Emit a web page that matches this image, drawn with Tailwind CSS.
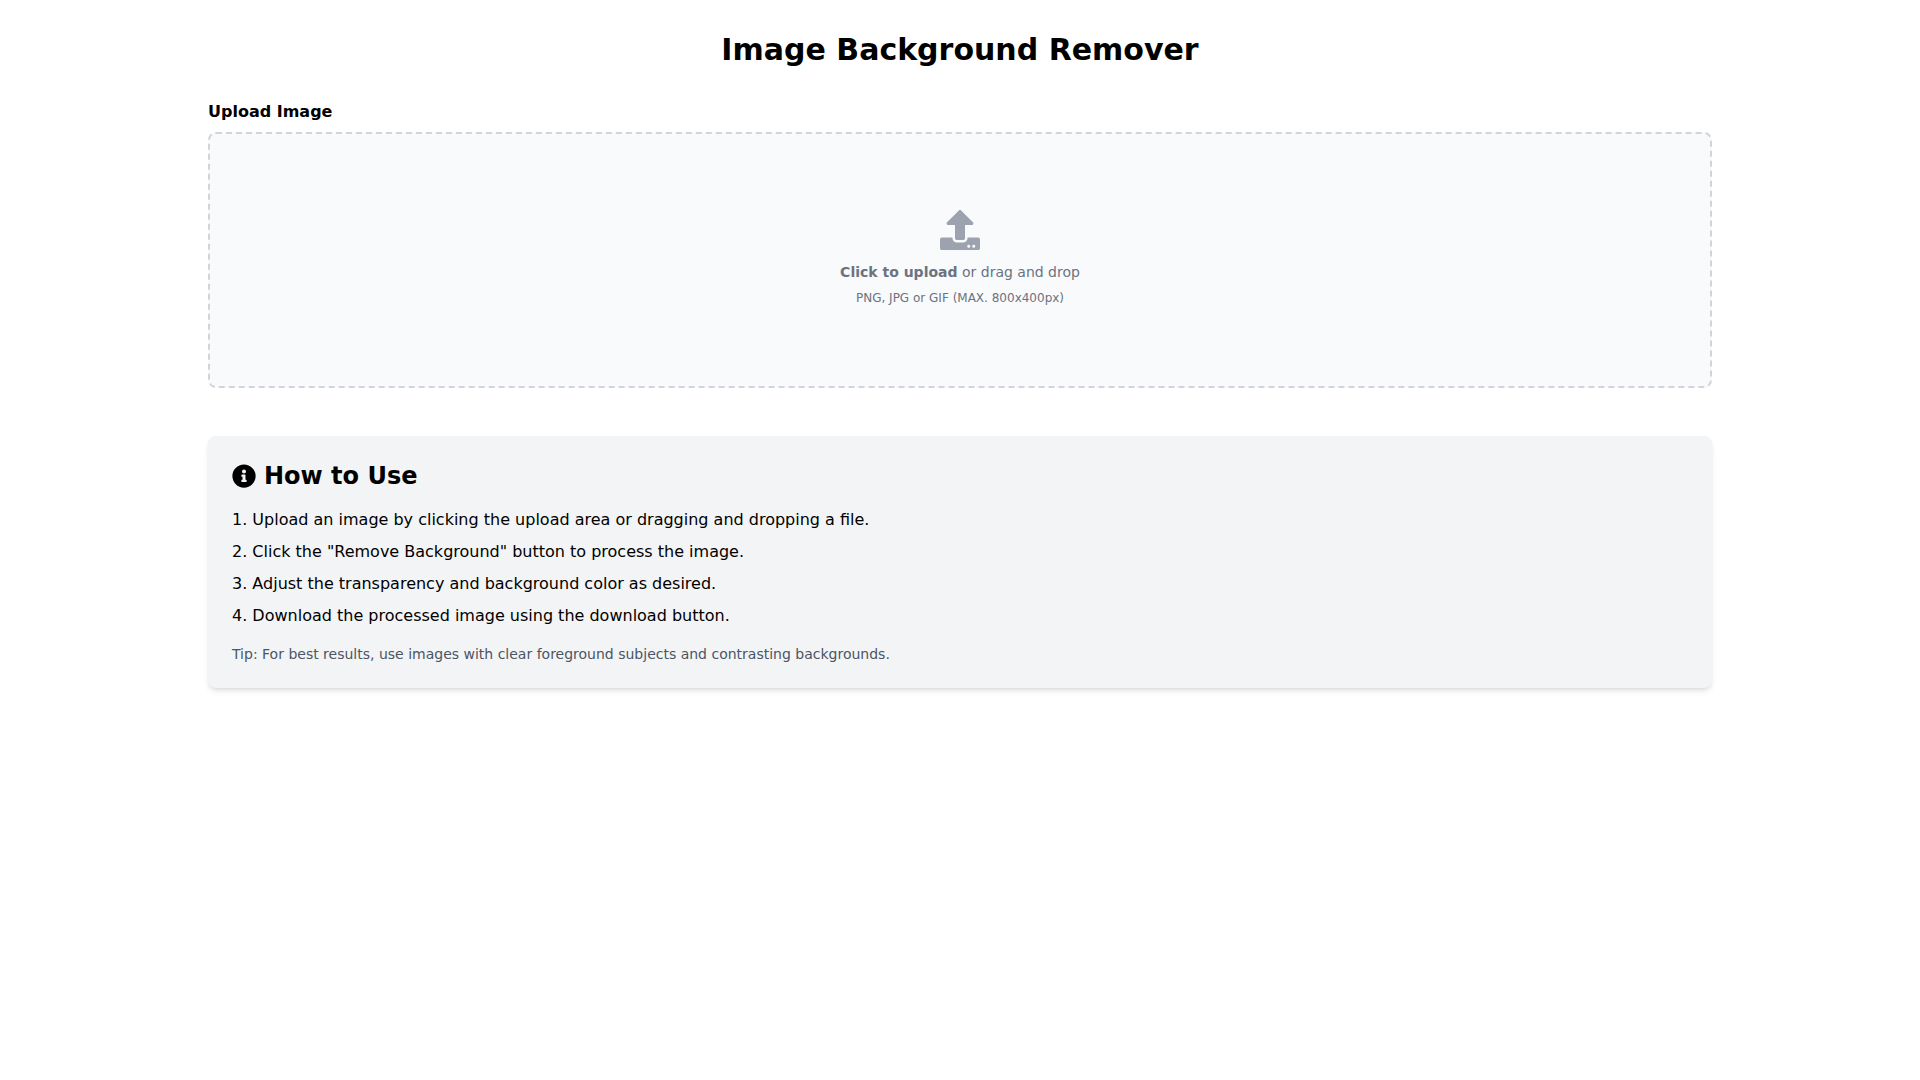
<!DOCTYPE html>
<html lang="en">
<head>
    <meta charset="UTF-8">
    <meta name="viewport" content="width=device-width, initial-scale=1.0">
    <title>Image Background Remover</title>
    <script src="https://cdn.jsdelivr.net/npm/@tailwindcss/browser@4"></script>
</head>
<body class="min-h-screen bg-white text-black font-['DejaVu_Sans',sans-serif]">

    <main class="container mx-auto px-4 py-8">
        <h1 class="text-3xl font-bold text-center mb-8">Image Background Remover</h1>

        <!-- Upload area -->
        <section class="mb-12">
            <label for="imageUpload" class="block font-semibold mb-2">Upload Image</label>
            <label id="dropZone" for="imageUpload" class="flex flex-col items-center justify-center w-full h-64 border-2 border-[#d1d5db] border-dashed rounded-lg cursor-pointer bg-[#f9fafb] hover:bg-[#f3f4f6]">
                <div class="flex flex-col items-center justify-center pt-5 pb-6">
                    <svg class="w-10 h-10 mb-3 text-[#9ca3af]" viewBox="0 0 512 512" fill="currentColor" aria-hidden="true">
                        <path d="M296 384h-80c-13.3 0-24-10.7-24-24V192h-87.7c-17.8 0-26.7-21.5-14.1-34.1L242.3 5.7c7.5-7.5 19.8-7.5 27.3 0l152.2 152.2c12.6 12.6 3.7 34.1-14.1 34.1H320v168c0 13.3-10.7 24-24 24zm216-8v112c0 13.3-10.7 24-24 24H24c-13.3 0-24-10.7-24-24V376c0-13.3 10.7-24 24-24h136v8c0 30.9 25.1 56 56 56h80c30.9 0 56-25.1 56-56v-8h136c13.3 0 24 10.7 24 24zm-124 88c0-11-9-20-20-20s-20 9-20 20 9 20 20 20 20-9 20-20zm64 0c0-11-9-20-20-20s-20 9-20 20 9 20 20 20 20-9 20-20z"/>
                    </svg>
                    <p class="mb-2 text-sm text-[#6b7280]"><span class="font-semibold">Click to upload</span> or drag and drop</p>
                    <p id="fileHint" class="text-xs text-[#6b7280]">PNG, JPG or GIF (MAX. 800x400px)</p>
                </div>
                <input id="imageUpload" type="file" class="hidden" accept="image/*">
            </label>
        </section>

        <!-- Instructions -->
        <section class="bg-[#f3f4f6] p-6 rounded-lg shadow-md">
            <h2 class="flex items-center text-2xl font-bold mb-4">
                <svg class="w-6 h-6 mr-2" viewBox="0 0 512 512" fill="currentColor" aria-hidden="true">
                    <path d="M256 8C119.043 8 8 119.083 8 256c0 136.997 111.043 248 248 248s248-111.003 248-248C504 119.083 392.957 8 256 8zm0 110c23.196 0 42 18.804 42 42s-18.804 42-42 42-42-18.804-42-42 18.804-42 42-42zm56 254c0 6.627-5.373 12-12 12h-88c-6.627 0-12-5.373-12-12v-24c0-6.627 5.373-12 12-12h12v-64h-12c-6.627 0-12-5.373-12-12v-24c0-6.627 5.373-12 12-12h64c6.627 0 12 5.373 12 12v100h12c6.627 0 12 5.373 12 12v24z"/>
                </svg>
                How to Use
            </h2>
            <ol class="list-decimal list-inside space-y-2">
                <li>Upload an image by clicking the upload area or dragging and dropping a file.</li>
                <li>Click the "Remove Background" button to process the image.</li>
                <li>Adjust the transparency and background color as desired.</li>
                <li>Download the processed image using the download button.</li>
            </ol>
            <p class="mt-4 text-sm text-[#4b5563]">Tip: For best results, use images with clear foreground subjects and contrasting backgrounds.</p>
        </section>
    </main>

    <script>
        const imageUpload = document.getElementById('imageUpload');
        const dropZone = document.getElementById('dropZone');
        const fileHint = document.getElementById('fileHint');

        // Show the name of the chosen file under the upload text
        function showFile() {
            if (imageUpload.files.length > 0) {
                fileHint.textContent = imageUpload.files[0].name;
            }
        }

        imageUpload.addEventListener('change', showFile);
        dropZone.addEventListener('dragover', (e) => e.preventDefault());
        dropZone.addEventListener('drop', (e) => {
            e.preventDefault();
            imageUpload.files = e.dataTransfer.files;
            showFile();
        });
    </script>

</body>
</html>
